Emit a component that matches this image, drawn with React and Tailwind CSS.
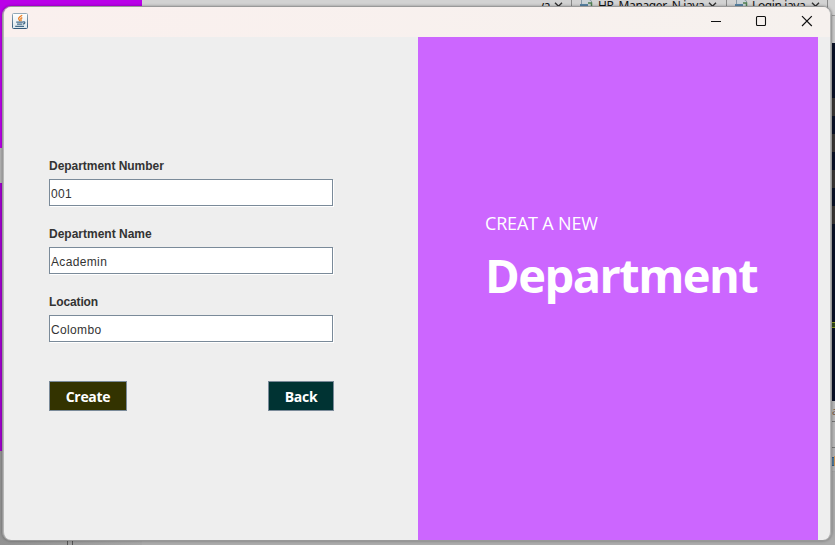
const fields = [
  { label: 'Department Number', value: '001', labelSpacing: 'tracking-[-0.03px]' },
  { label: 'Department Name', value: 'Academin', labelSpacing: 'tracking-[0px]' },
  { label: 'Location', value: 'Colombo', labelSpacing: 'tracking-[-0.12px]' },
];

function JavaIcon() {
  return (
    <svg width="16" height="16" viewBox="0 0 16 16" fill="none">
      <defs>
        <linearGradient id="tile" x1="0" y1="0" x2="0" y2="1">
          <stop offset="0" stopColor="#fff" />
          <stop offset="1" stopColor="#dce6ec" />
        </linearGradient>
        <linearGradient id="edge" x1="0" y1="0" x2="0" y2="1">
          <stop offset="0" stopColor="#93a9b8" />
          <stop offset="1" stopColor="#345a7b" />
        </linearGradient>
      </defs>
      <rect x=".5" y=".5" width="15" height="15" rx="1" fill="url(#tile)" stroke="url(#edge)" />
      <path d="M10.2 2.3C7.5 4 6 5 6.8 6.2c.5.8 1 1.2.7 2M10.3 4.6C8.3 5.6 8.6 6 9.1 6.8c.3.5 0 .9-.5 1.4" stroke="#ec7f24" strokeWidth="1.3" />
      <path d="M4.2 9.2h6.6M5 11.2h5.3M3.2 13.4h8.8M10.8 9c2.6-.8 2.8 1.5.2 2.2" stroke="#466c8a" strokeWidth="1.25" />
    </svg>
  );
}

function FileIcon() {
  return (
    <svg width="14" height="14" viewBox="0 0 14 14" fill="none" className="shrink-0">
      <path d="M2.5 -1h7l3 2v10h-10z" fill="#cbd3d8" stroke="#8799a5" />
      <path d="M1 4h8v4H1z" fill="#5985a5" />
      <path d="M9 3h3.5v3" stroke="#518052" strokeWidth="1.5" />
    </svg>
  );
}

function Chevron() {
  return (
    <svg width="9" height="6" viewBox="0 0 9 6" fill="none" stroke="#333" strokeWidth="1.4" className="shrink-0">
      <path d="M1 .8l3.5 3.5L8 .8" />
    </svg>
  );
}

function EditorTabs() {
  return (
    <div className="flex h-[16px] w-[693px] items-start border-b border-[#999] bg-[#d2d2d2] font-['Noto_Sans',sans-serif] text-[12px] leading-[14px] text-[#111]">
      <div className="w-[399px] shrink-0" />
      <div className="flex h-full w-[31px] shrink-0 items-start border-r border-[#888]">
        <span className="-mt-px flex w-[9px] justify-end overflow-hidden tracking-[-0.4px]">va</span>
        <span className="ml-[4px] mt-[2px]"><Chevron /></span>
      </div>
      <div className="flex h-full w-[155px] shrink-0 items-start border-r border-[#888] pl-[7px]">
        <FileIcon />
        <span className="-mt-px ml-[5px] w-[108px] whitespace-nowrap tracking-[-0.38px]">HR_Manager_N.java</span>
        <span className="mt-[2px] ml-[2px]"><Chevron /></span>
      </div>
      <div className="flex h-full w-[101px] shrink-0 items-start border-r border-[#888] pl-[7px]">
        <FileIcon />
        <span className="-mt-px ml-[4px] w-[56px] whitespace-nowrap tracking-[-0.4px]">Login.java</span>
        <span className="mt-[2px] ml-[3px]"><Chevron /></span>
      </div>
    </div>
  );
}

function Desktop() {
  return (
    <div className="flex h-full w-full bg-[#b0b0b0]">
      <div className="flex w-[142px] flex-col">
        <div className="h-[148px] bg-[#ba00e8]" />
        <div className="h-[35px] bg-[#b5b5b5]" />
        <div className="h-[268px] bg-[#a100ce]" />
        <div className="flex-1 bg-[#949494]" />
        <div className="flex h-[5px] bg-gradient-to-r from-[#929292] to-[#a8a8a8]">
          <div className="ml-[67px] h-full w-[6px] border-x border-[#555]" />
        </div>
      </div>
      <div className="flex flex-1 flex-col">
        <EditorTabs />
        <div className="flex h-[27px] justify-end bg-[#cacaca]" />
        <div className="flex h-[358px] flex-col items-end bg-[#0b1227]">
          <div className="mt-[55px] h-[18px] w-1 bg-[#393635]" />
          <div className="mt-[18px] h-[18px] w-1 bg-[#393635]" />
          <div className="mt-[18px] h-[18px] w-1 bg-[#393635]" />
          <div className="mt-[18px] h-[18px] w-1 bg-[#393635]" />
          <div className="mt-[98px] h-[6px] w-[3px] border-y border-[#899922] bg-[#30451b]" />
        </div>
        <div className="flex h-[21px] justify-end border-b border-[#777] bg-[#b9b9b9]">
          <span className="w-[3px] pt-[3px] font-['Noto_Sans',sans-serif] text-[11px] leading-[14px] text-[#765c4c]">a</span>
        </div>
        <div className="h-[26px] border-b border-[#777] bg-[#b9b9b9]" />
        <div className="flex h-[24px] justify-end border-b border-[#a5a5a5] bg-[#b3b3b3]">
          <div className="mt-[9px] h-[9px] w-[2px] border-y border-[#315c87] bg-[#50799a]" />
          <div className="mt-[8px] h-[10px] w-px bg-[#c99354]" />
        </div>
        <div className="flex-1 bg-[#acacac]" />
      </div>
    </div>
  );
}

function TitleBar() {
  return (
    <header className="flex h-[30px] shrink-0 items-start bg-gradient-to-r from-[#faf0ee] to-[#f6f1ee]">
      <div className="ml-[8px] mt-[6px]"><JavaIcon /></div>
      <svg width="108" height="16" viewBox="0 0 108 16" fill="none" stroke="#111" className="ml-auto mr-[13px] mt-[6px] shrink-0">
        <path d="M2 8.5h10" strokeWidth="1" />
        <rect x="47.5" y="3.5" width="9" height="9" rx="1" strokeWidth="1.1" />
        <path d="M93 3.2l9.8 9.8M102.8 3.2L93 13" strokeWidth="1.2" />
      </svg>
    </header>
  );
}

function Field({ label, value, labelSpacing }) {
  return (
    <div className="h-[68px]">
      <label className={`block h-[21px] whitespace-nowrap font-['Liberation_Sans',Arial,sans-serif] text-[12px] font-bold leading-[16px] text-[#333] ${labelSpacing}`}>
        {label}
      </label>
      <div className="flex h-[27px] w-[284px] items-center border border-[#7a8a99] bg-white pl-px pt-[2px] font-['Liberation_Sans',Arial,sans-serif] text-[12px] leading-[16px] tracking-[0.35px] text-[#333] shadow-[1px_1px_0_#fff]">
        {value}
      </div>
    </div>
  );
}

export default function App() {
  return (
    <div className="relative h-[545px] w-[835px] overflow-hidden">
      <Desktop />
      <div className="absolute left-[2px] top-[6px] h-[535px] w-[830px] rounded-[9px] border border-[#999] shadow-[0_0_3px_rgba(0,0,0,0.35)]">
        <div className="flex h-full w-full flex-col overflow-hidden rounded-[8px] border-x border-[#b5b5b5] bg-[#eee]">
          <TitleBar />
          <main className="flex min-h-0 flex-1">
            <section className="w-[414px] shrink-0 pl-[45px] pt-[121px]">
              {fields.map((field) => (
                <Field key={field.label} {...field} />
              ))}
              <div className="mt-[19px] flex w-[285px] justify-between font-['Open_Sans',sans-serif] text-[14px] font-bold leading-[20px] tracking-[-0.3px] text-white">
                <button className="h-[30px] w-[78px] border border-[#7a8a99] bg-[#333300] pt-[2px]">Create</button>
                <button className="h-[30px] w-[66px] border border-[#7a8a99] bg-[#003333] pt-[2px]">Back</button>
              </div>
            </section>
            <section className="w-[400px] shrink-0 bg-[#cc66ff] pl-[67px] pt-[174px] text-white">
              <p className="whitespace-nowrap font-['Open_Sans',sans-serif] text-[18px] font-normal leading-[24px] tracking-[-0.18px]">CREAT A NEW</p>
              <h1 className="mt-[8px] whitespace-nowrap font-['Open_Sans',sans-serif] text-[47px] font-bold leading-[64px] tracking-[-1.55px]">Department</h1>
            </section>
          </main>
        </div>
      </div>
    </div>
  );
}
